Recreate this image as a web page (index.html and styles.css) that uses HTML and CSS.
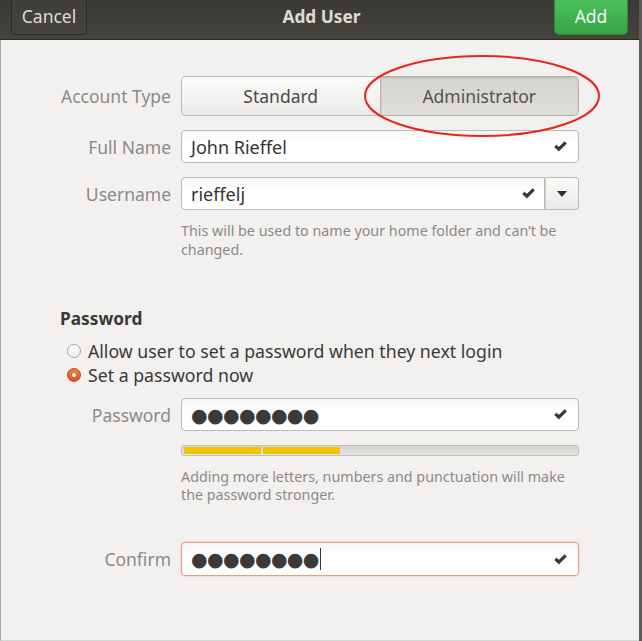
FILE: index.html
```html
<!DOCTYPE html>
<html>
<head>
<meta charset="utf-8">
<link rel="stylesheet" href="styles.css">
</head>
<body>
<div class="window">
  <header class="headerbar">
    <button class="hb-btn cancel">Cancel</button>
    <div class="title">Add User</div>
    <button class="hb-btn add">Add</button>
  </header>
  <main class="content">
    <div class="form-grid account">
      <div class="lbl lbl-toggle">Account Type</div>
      <div class="toggle">
        <div class="tbtn">Standard</div>
        <div class="tbtn active">Administrator</div>
        <svg class="annot" width="240" height="86" viewBox="0 0 240 86">
          <ellipse cx="120" cy="43" rx="117" ry="40" fill="none" stroke="#e8261b" stroke-width="2"/>
        </svg>
      </div>

      <div class="lbl">Full Name</div>
      <div class="entry">
        <span class="val">John Rieffel</span>
        <svg class="check" width="13" height="11" viewBox="0 0 13 11"><path d="M0.4 5.9 L2.6 3.9 L4.9 6.1 L10.6 0.4 L12.6 2.4 L4.9 10.3 Z" fill="#383838" stroke="#383838" stroke-width="0.4" stroke-linejoin="round"/></svg>
      </div>

      <div class="lbl">Username</div>
      <div class="combo">
        <div class="entry combo-entry">
          <span class="val">rieffelj</span>
          <svg class="check" width="13" height="11" viewBox="0 0 13 11"><path d="M0.4 5.9 L2.6 3.9 L4.9 6.1 L10.6 0.4 L12.6 2.4 L4.9 10.3 Z" fill="#383838" stroke="#383838" stroke-width="0.4" stroke-linejoin="round"/></svg>
        </div>
        <div class="drop"><svg width="10" height="6" viewBox="0 0 10 6"><path d="M0 0 H10 L5 6 Z" fill="#2e2e2e"/></svg></div>
      </div>

      <div></div>
      <p class="hint hint-user">This will be used to name your home folder and can’t be changed.</p>
    </div>

    <section class="pw">
      <h3 class="pw-title">Password</h3>
      <div class="radio"><span class="rdot"></span><span>Allow user to set a password when they next login</span></div>
      <div class="radio checked"><span class="rdot"></span><span>Set a password now</span></div>

      <div class="form-grid pw-grid">
        <div class="lbl">Password</div>
        <div class="entry">
          <span class="val dots">●●●●●●●●</span>
          <svg class="check" width="13" height="11" viewBox="0 0 13 11"><path d="M0.4 5.9 L2.6 3.9 L4.9 6.1 L10.6 0.4 L12.6 2.4 L4.9 10.3 Z" fill="#383838" stroke="#383838" stroke-width="0.4" stroke-linejoin="round"/></svg>
        </div>

        <div></div>
        <div class="strength">
          <span class="seg"></span><span class="seg"></span>
        </div>

        <div></div>
        <p class="hint hint-pw">Adding more letters, numbers and punctuation will make the password stronger.</p>

        <div class="lbl lbl-confirm">Confirm</div>
        <div class="entry focus confirm">
          <span class="val dots">●●●●●●●●</span><span class="caret"></span>
          <svg class="check" width="13" height="11" viewBox="0 0 13 11"><path d="M0.4 5.9 L2.6 3.9 L4.9 6.1 L10.6 0.4 L12.6 2.4 L4.9 10.3 Z" fill="#383838" stroke="#383838" stroke-width="0.4" stroke-linejoin="round"/></svg>
        </div>
      </div>
    </section>
  </main>
</div>
</body>
</html>
```

FILE: styles.css
```css
html, body {
  margin: 0;
  padding: 0;
}
body {
  background: #5b5a58;
  font-family: "Noto Sans", "Open Sans", sans-serif;
  width: 642px;
  height: 641px;
  overflow: hidden;
}
.window {
  width: 639px;
  height: 641px;
  background: #f2f1f0;
  display: flex;
  flex-direction: column;
}
.headerbar {
  height: 40px;
  flex: 0 0 40px;
  box-sizing: border-box;
  background: linear-gradient(#3a3935, #45433e);
  border-bottom: 1px solid #2c2b28;
  display: flex;
  align-items: flex-start;
  justify-content: space-between;
  padding: 0 11px 0 11px;
}
.hb-btn {
  font-family: inherit;
  font-size: 17.5px;
  height: 35px;
  box-sizing: border-box;
  border-radius: 0 0 5px 5px;
  border: 1px solid #2b2a27;
  border-top: none;
  color: #dedbd4;
  padding: 0 0 2px;
  margin: 0;
  cursor: default;
}
.cancel {
  width: 76px;
  background: linear-gradient(#403e3a, #46443f);
}
.add {
  width: 74px;
  background: linear-gradient(#4cbf5b, #36a447);
  border-color: #2c8a3a;
  color: #f4f7f2;
}
.title {
  color: #dfdbd2;
  font-weight: bold;
  font-size: 17.3px;
  line-height: 33px;
  padding-left: 2px;
}
.content {
  flex: 1;
  border-left: 1px solid #aaa8a4;
  border-bottom: 1px solid #d9d7d3;
  padding-top: 36px;
  box-sizing: border-box;
}
.form-grid {
  display: grid;
  grid-template-columns: 111px 398px;
  column-gap: 10px;
  padding-left: 59px;
  align-items: center;
}
.account {
  row-gap: 14px;
}
.lbl {
  text-align: right;
  color: #8d8a86;
  font-size: 17.5px;
  white-space: nowrap;
}
.toggle {
  position: relative;
  display: flex;
  height: 40px;
}
.tbtn {
  flex: 1;
  box-sizing: border-box;
  border: 1px solid #bdbab5;
  display: flex;
  align-items: center;
  justify-content: center;
  font-size: 17.5px;
  color: #4a4a48;
  background: linear-gradient(#fbfbfa, #ecebe9);
}
.tbtn:first-child {
  border-radius: 5px 0 0 5px;
  border-right: none;
}
.tbtn.active {
  border-radius: 0 5px 5px 0;
  background: linear-gradient(#d6d4d0, #dfddd9);
  border-color: #b4b1ab;
  box-shadow: inset 0 1px 2px rgba(0,0,0,0.12);
  color: #55534f;
}
.annot {
  position: absolute;
  left: 181px;
  top: -23px;
  pointer-events: none;
}
.entry {
  height: 33px;
  box-sizing: border-box;
  border: 1px solid #bdbab5;
  border-radius: 4px;
  background: linear-gradient(#f6f6f5, #ffffff 40%);
  display: flex;
  align-items: center;
  padding: 0 11px 0 9px;
  font-size: 18px;
  color: #353433;
}
.check {
  flex: 0 0 auto;
  margin-left: auto;
}
.combo {
  display: flex;
  height: 33px;
}
.combo-entry {
  flex: 1;
  border-radius: 4px 0 0 4px;
  padding-right: 9px;
}
.drop {
  width: 34px;
  box-sizing: border-box;
  border: 1px solid #bdbab5;
  border-left: 1px solid #cfccc7;
  border-radius: 0 4px 4px 0;
  background: linear-gradient(#fafaf9, #ebeae8);
  display: flex;
  align-items: center;
  justify-content: center;
}
.hint {
  margin: 0;
  font-size: 14.3px;
  line-height: 19px;
  color: #8d8a86;
}
.hint-user {
  margin-top: -3px;
  padding-right: 6px;
}
.pw {
  padding-top: 48px;
}
.pw-title {
  margin: 0 0 8px 59px;
  font-size: 17.3px;
  line-height: 24px;
  font-weight: bold;
  color: #3a3937;
}
.radio {
  display: flex;
  align-items: center;
  height: 24px;
  padding-left: 66px;
  font-size: 17.7px;
  color: #3a3937;
}
.rdot {
  width: 14px;
  height: 14px;
  box-sizing: border-box;
  border-radius: 50%;
  border: 1px solid #a9a69f;
  background: linear-gradient(#ffffff, #eeedeb);
  margin-right: 7px;
  position: relative;
  flex: 0 0 auto;
}
.radio.checked .rdot {
  border-color: #c4461a;
  background: linear-gradient(#f27a4a, #e0511c);
}
.radio.checked .rdot::after {
  content: "";
  position: absolute;
  left: 4px;
  top: 4px;
  width: 4px;
  height: 4px;
  border-radius: 50%;
  background: #fff;
}
.pw-grid {
  margin-top: 11px;
}
.dots {
  font-family: "DejaVu Sans", sans-serif;
  font-size: 19px;
  letter-spacing: -0.6px;
  color: #3a3a3a;
  flex: 0 0 auto;
}
.strength {
  margin-top: 14px;
  height: 11px;
  box-sizing: border-box;
  border: 1px solid #c2c0bb;
  border-radius: 3px;
  background: linear-gradient(#d6d4d0, #e3e2df);
  display: flex;
  gap: 2px;
  padding: 1px 2px;
}
.seg {
  width: 77px;
  background: #f3c400;
  border-radius: 1px;
}
.hint-pw {
  margin-top: 12px;
  line-height: 18px;
  padding-right: 6px;
}
.lbl-confirm {
  margin-top: 38px;
}
.confirm {
  margin-top: 38px;
  height: 34px;
}
.entry.focus {
  border-color: #ee9c79;
  box-shadow: 0 0 0 1px rgba(238,156,121,0.25);
}
.caret {
  width: 1px;
  height: 22px;
  background: #333;
  margin-left: 1px;
  flex: 0 0 auto;
}
```
